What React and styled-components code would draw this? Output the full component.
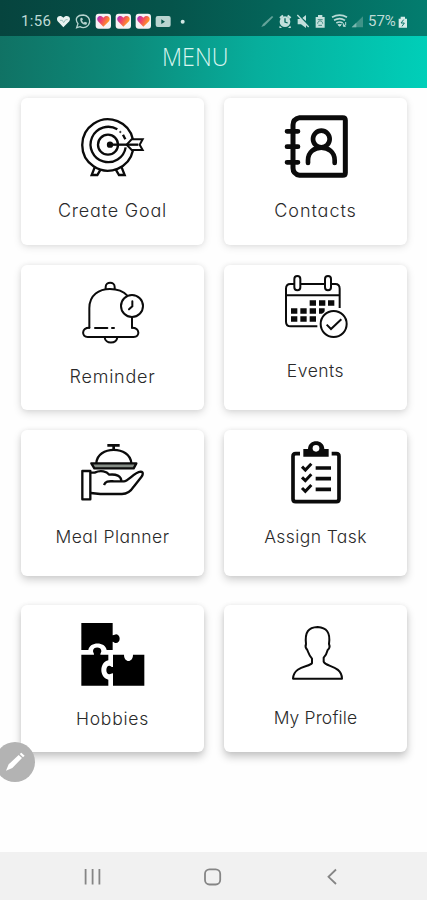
import styled, { createGlobalStyle } from 'styled-components';

const GlobalStyle = createGlobalStyle`
  body {
    margin: 0;
    background: #fefefe;
    font-family: Inter, 'Liberation Sans', sans-serif;
  }
`;

const Screen = styled.div`
  position: relative;
  display: flex;
  flex-direction: column;
  width: 427px;
  height: 900px;
  overflow: hidden;
`;

const StatusBar = styled.div`
  display: flex;
  height: 36px;
  background: linear-gradient(90deg, #06443e, #05544b 40%, #04655a 65%, #037d6f);
`;

const StatusText = styled.span`
  width: ${(props) => props.$width}px;
  margin-left: ${(props) => props.$left}px;
  font: 400 15px/43px Roboto, sans-serif;
  letter-spacing: ${(props) => props.$spacing || 0}px;
  white-space: nowrap;
  color: #bfdbd6;
`;

const StatusSpacer = styled.div`
  flex: 1;
`;

const Glyph = styled.svg`
  display: block;
  flex: none;
  height: 36px;
`;

const Header = styled.header`
  height: 52px;
  padding-left: 162px;
  background: linear-gradient(93deg, #107264, #0c8b7b 30%, #07ae9c 60%, #00cfb9);
`;

const Title = styled.h1`
  width: 80px;
  margin: 0;
  font: 300 25px/41px 'Open Sans', sans-serif;
  transform: scaleX(0.93);
  transform-origin: left;
  color: #d9f5f0;
`;

const Menu = styled.main`
  display: flex;
  flex-direction: column;
  flex: 1;
  padding: 10px 20px 0 21px;
`;

const Row = styled.div`
  display: grid;
  grid-template-columns: 183px 183px;
  column-gap: 20px;
  margin-bottom: ${(props) => props.$gap}px;
`;

const Card = styled.div`
  display: flex;
  flex-direction: column;
  align-items: center;
  box-sizing: border-box;
  height: ${(props) => props.$height}px;
  padding-top: 10px;
  border-radius: 6px;
  background: #fff;
  box-shadow: 0 ${(props) => props.$depth}px 8px rgba(0, 0, 0, ${(props) => props.$shade}),
    0 0 5px rgba(0, 0, 0, 0.06);
`;

const CardIcon = styled.svg`
  display: block;
  flex: none;
  width: 70px;
  height: 75px;
  fill: none;
  stroke: #0b0b0b;
  stroke-width: ${(props) => props.$weight || 6};
`;

const Label = styled.span`
  margin-top: ${(props) => props.$top}px;
  font-size: ${(props) => props.$size || 17.5}px;
  font-weight: 300;
  line-height: 20px;
  letter-spacing: ${(props) => props.$spacing}px;
  font-feature-settings: 'cv11';
  white-space: nowrap;
  color: #2a2a2a;
`;

const PenButton = styled.div`
  position: absolute;
  left: -5px;
  top: 742px;
  width: 40px;
  height: 40px;
  border-radius: 50%;
  background: #b3b3b3;
`;

const NavBar = styled.nav`
  display: flex;
  align-items: center;
  justify-content: space-between;
  box-sizing: border-box;
  height: 48px;
  padding: 1px 85px 0 83px;
  background: #f1f1f1;
`;

const NavIcon = styled.svg`
  width: 20px;
  height: 20px;
  fill: none;
  stroke: #858585;
  stroke-width: 1.8;
`;

const GoalIcon = () => (
  <CardIcon viewBox="203 54 210 225" $weight={7}>
    <path d="M368 149 A77 77 0 1 0 368 181" />
    <path d="M321 118 A53 53 0 1 0 346 172 M338 134 l7 14" />
    <circle cx="330" cy="126" r="2" strokeWidth="3" />
    <circle cx="293" cy="164" r="30" />
    <circle cx="299" cy="164" r="6" fill="#0b0b0b" />
    <path d="M300 164 H384" />
    <path d="M349 164 L364 148 H397 L388 164 L397 180 H364 Z" strokeWidth="6" />
    <path d="M254 230 L244 255 H261 L271 238 M316 238 L326 255 H343 L333 230" />
  </CardIcon>
);

const ContactsIcon = () => (
  <CardIcon viewBox="197 54 210 225" $weight={15} strokeLinecap="round">
    <path d="M253 83 H382 Q390 83 390 91 V248 Q390 256 382 256 H253 Q233 252 233 234 V105 Q233 87 253 83 Z" />
    <path d="M215 124 H248 M215 170 H248 M215 217 H248" strokeWidth="14" />
    <circle cx="318" cy="147" r="25" strokeWidth="14" />
    <path d="M278 219 V211 C278 160 358 160 358 211 V219" strokeWidth="14" />
  </CardIcon>
);

const ReminderIcon = () => (
  <CardIcon viewBox="203 60 210 225" strokeLinecap="round">
    <path d="M286 102 V96 C286 79 313 79 313 96 V102" />
    <path d="M237 218 V160 C237 119 267 102 299 102 C321 102 340 110 351 122 M365 186 V218" />
    <path d="M237 218 C213 218 213 246 232 246 H370 C390 246 389 218 365 218" />
    <path d="M254 219 H291 M305 219 H311 M283 247 C285 268 318 268 321 247" />
    <circle cx="365" cy="153" r="33" />
    <path d="M366 139 V154 L356 163" />
  </CardIcon>
);

const EventsIcon = () => (
  <CardIcon viewBox="197 60 210 225">
    <path d="M236 87 H225 Q212 87 212 101 V200 Q212 214 226 214 H306 M256 87 H328 M348 87 H360 Q373 87 373 101 V159 M212 121 H373" />
    <rect x="237" y="63" width="18" height="43" rx="9" />
    <rect x="329" y="63" width="18" height="43" rx="9" />
    <path d="M283 144 H302 M311 144 H330 M338 144 H357 M227 168 H246 M255 168 H274 M283 168 H302 M311 168 H328 M227 192 H246 M255 192 H274 M283 192 H302" strokeWidth="16" />
    <circle cx="355" cy="207" r="46" fill="#fff" stroke="none" />
    <circle cx="355" cy="207" r="39" />
    <path d="M334 209 L347 222 L378 193" />
  </CardIcon>
);

const MealIcon = () => (
  <CardIcon viewBox="203 60 210 225" $weight={7} strokeLinejoin="round">
    <path d="M291 76 H328 M310 76 V89" strokeWidth="8" />
    <path d="M258 130 C260 76 360 76 363 130" />
    <path d="M243 130 H378 L370 145 H252 Z" fill="#858d86" />
    <path d="M216 153 H240 V238 H216 Z" />
    <path d="M241 158 H253 C272 149 289 155 297 164 C317 162 333 167 333 184 M281 195 C286 181 298 184 312 184 H341 C354 184 370 158 391 155 C401 156 397 166 393 171 L370 200 C362 213 351 222 335 222 H270 L241 219" />
  </CardIcon>
);

const TaskIcon = () => (
  <CardIcon viewBox="197 60 210 225" $weight={11}>
    <path d="M254 101 H241 Q233 101 233 109 V237 Q233 245 241 245 H363 Q371 245 371 237 V109 Q371 101 363 101 H349" />
    <path d="M264 110 V87 H278 C279 56 326 56 327 87 H340 V110 Z" fill="#0b0b0b" stroke="none" />
    <circle cx="302" cy="85" r="10" fill="#fff" stroke="none" />
    <path d="M301 144 H347 M301 176 H347 M301 208 H347" />
    <path d="M260 140 L270 150 L288 131 M260 172 L270 182 L288 163 M260 204 L270 214 L288 195" strokeWidth="9" />
  </CardIcon>
);

const HobbiesIcon = () => (
  <CardIcon viewBox="233 60 210 225">
    <g fill="#000" stroke="none">
      <path d="M243 84 H337 V121 C343 121 343 118 348 118 C354 118 358 125 358 131 C358 138 353 144 347 144 C342 144 341 140 337 140 V165 H319 C315 139 268 139 264 165 H243 Z" />
      <path d="M243 179 H281 C281 174 278 173 278 168 C278 154 303 154 303 168 C303 173 300 174 300 179 H324 V196 C296 202 296 248 324 254 V272 H243 Z" />
      <path d="M338 179 H371 C371 204 398 204 398 179 H432 V272 H338 V235 C332 235 332 238 327 238 C315 238 315 212 327 212 C332 212 332 216 338 216 Z" />
    </g>
  </CardIcon>
);

const ProfileIcon = () => (
  <CardIcon viewBox="197 60 210 225" strokeLinejoin="round">
    <path d="M233 251 H380 C379 211 330 216 325 200 V188 C333 180 335 173 337 165 C343 160 344 154 341 147 C346 111 333 98 307 96 C279 97 268 111 272 147 C269 154 271 160 276 165 C280 175 281 181 290 191 V204 C285 216 235 212 233 251 Z" />
  </CardIcon>
);

// each card carries its own label offset and letter spacing
const rows = [
  {
    gap: 20,
    height: 147,
    depth: 2,
    shade: 0.11,
    cards: [
      { label: 'Create Goal', Icon: GoalIcon, top: 17.5, spacing: 0.8, size: 18 },
      { label: 'Contacts', Icon: ContactsIcon, top: 17.5, spacing: 0.95, size: 18 },
    ],
  },
  {
    gap: 20,
    height: 145,
    depth: 3,
    shade: 0.14,
    cards: [
      { label: 'Reminder', Icon: ReminderIcon, top: 16.5, spacing: 0.75, size: 18 },
      { label: 'Events', Icon: EventsIcon, top: 11, spacing: 0.5 },
    ],
  },
  {
    gap: 29,
    height: 146,
    depth: 4,
    shade: 0.18,
    cards: [
      { label: 'Meal Planner', Icon: MealIcon, top: 12, spacing: 0.5 },
      { label: 'Assign Task', Icon: TaskIcon, top: 12, spacing: 0.4 },
    ],
  },
  {
    gap: 0,
    height: 147,
    depth: 5,
    shade: 0.22,
    cards: [
      { label: 'Hobbies', Icon: HobbiesIcon, top: 18.5, spacing: 0.75 },
      { label: 'My Profile', Icon: ProfileIcon, top: 17.5, spacing: 0.15 },
    ],
  },
];

const AppBadge = () => (
  <Glyph viewBox="0 0 60 108" width="20">
    <defs>
      <linearGradient id="badge" x1="0" y1="0" x2="1" y2="0.5">
        <stop offset="0" stopColor="#9b2bd6" />
        <stop offset="0.45" stopColor="#f0446a" />
        <stop offset="1" stopColor="#ffa21a" />
      </linearGradient>
    </defs>
    <rect x="2" y="41" width="46" height="45" rx="9" fill="#f6f3f4" />
    <path d="M25 80 L9 64 C1 50 17 42 25 53 C33 42 50 50 42 64 Z" fill="url(#badge)" />
  </Glyph>
);

const StatusIconsLeft = () => (
  <>
    <Glyph viewBox="168 0 118 108" width="39.3">
      <path d="M190 82 L173 64 C165 49 182 42 190 53 C198 42 216 49 208 64 Z" fill="#e8f3f1" />
      <path d="M180 61 H187 L191 68 L197 59 H203" fill="none" stroke="#9cc0ba" strokeWidth="3" />
      <path d="M230 83 L234 71 C222 54 234 45 250 45 C264 46 270 57 269 66 C266 83 250 86 240 80 Z" fill="none" stroke="#b5d2cd" strokeWidth="4" />
      <path d="M242 54 C237 65 250 76 259 74 L262 68 L255 65 L251 68 L246 62 L249 58 L246 53 Z" fill="#b5d2cd" />
    </Glyph>
    <AppBadge />
    <AppBadge />
    <AppBadge />
    <Glyph viewBox="464 0 96 108" width="32">
      <rect x="466" y="48" width="45" height="33" rx="6" fill="#b9d4d0" />
      <path d="M483 58 V72 L494 65 Z" fill="#07544b" />
      <circle cx="547" cy="65" r="6" fill="#d2e6e3" />
    </Glyph>
  </>
);

const StatusIconsRight = () => (
  <Glyph viewBox="140 0 312 108" width="104" fill="#c3e0dc">
    <path d="M144 81 L149 72 L176 48 L180 51 L154 77 Z" fill="#64a39a" />
    <circle cx="215" cy="65" r="16" />
    <path d="M198 52 L207 44 L211 49 L202 57 Z M221 49 L225 44 L234 52 L229 57 Z M199 77 L206 83 L203 84 H198 Z M231 77 L224 83 L227 84 H233 Z" />
    <path d="M215 55 V66 L223 69" fill="none" stroke="#07685d" strokeWidth="4" />
    <path d="M253 57 H262 L278 70 V84 L263 73 H253 Z M267 54 L278 45 V63 Z" />
    <path d="M252 45 L286 81" stroke="#c3e0dc" strokeWidth="4" />
    <path d="M307 51 H314 V45 H327 V51 H334 V83 H307 Z" />
    <path d="M313 71 C313 60 328 60 328 71 M313 59 H328 M315 76 H326" fill="none" stroke="#3f8c82" strokeWidth="3" />
    <path d="M356 52 Q379 39 401 52 M362 61 Q379 51 395 61 M369 69 Q379 63 388 69" fill="none" stroke="#b8dad5" strokeWidth="5" />
    <path d="M374 74 H384 L379 79 Z M390 70 V79 H397 M397 66 V76" stroke="#b8dad5" strokeWidth="3" />
    <path d="M415 82 L449 49 V82 Z" fill="#3f9388" />
    <path d="M415 82 L429 68 V82 Z" fill="#7db8b0" />
  </Glyph>
);

const App = () => (
  <Screen>
    <GlobalStyle />
    <StatusBar>
      <StatusText $left={21} $width={35} $spacing={0.3}>
        1:56
      </StatusText>
      <StatusIconsLeft />
      <StatusSpacer />
      <StatusIconsRight />
      <StatusText $left={4} $width={29} $spacing={0}>
        57%
      </StatusText>
      <Glyph viewBox="552 0 90 108" width="30">
        <path d="M557 56 H563 V50 H576 V56 H582 V83 H557 Z" fill="#d5ebe8" />
        <path d="M572 59 L564 69 H574 L567 79" fill="none" stroke="#087568" strokeWidth="3" />
      </Glyph>
    </StatusBar>
    <Header>
      <Title>MENU</Title>
    </Header>
    <Menu>
      {rows.map((row) => (
        <Row key={row.cards[0].label} $gap={row.gap}>
          {row.cards.map(({ label, Icon, top, spacing, size }) => (
            <Card key={label} $height={row.height} $depth={row.depth} $shade={row.shade}>
              <Icon />
              <Label $top={top} $spacing={spacing} $size={size}>
                {label}
              </Label>
            </Card>
          ))}
        </Row>
      ))}
    </Menu>
    <PenButton>
      <svg width="40" height="40" viewBox="-15 441 120 120" fill="#fff">
        <path d="M18 527 L26 508 L56 480 L66 489 L37 519 Z M59 477 L64 473 L74 482 L69 487 Z" />
      </svg>
    </PenButton>
    <NavBar>
      <NavIcon viewBox="0 0 20 20">
        <path d="M2.6 2 V17.5 M9.6 2 V17.5 M16.4 2 V17.5" />
      </NavIcon>
      <NavIcon viewBox="0 0 20 20">
        <rect x="2" y="2.3" width="15.2" height="15.2" rx="4.5" />
      </NavIcon>
      <NavIcon viewBox="0 0 20 20">
        <path d="M14 2.5 L6.5 9.8 L14 17" />
      </NavIcon>
    </NavBar>
  </Screen>
);

export default App;
